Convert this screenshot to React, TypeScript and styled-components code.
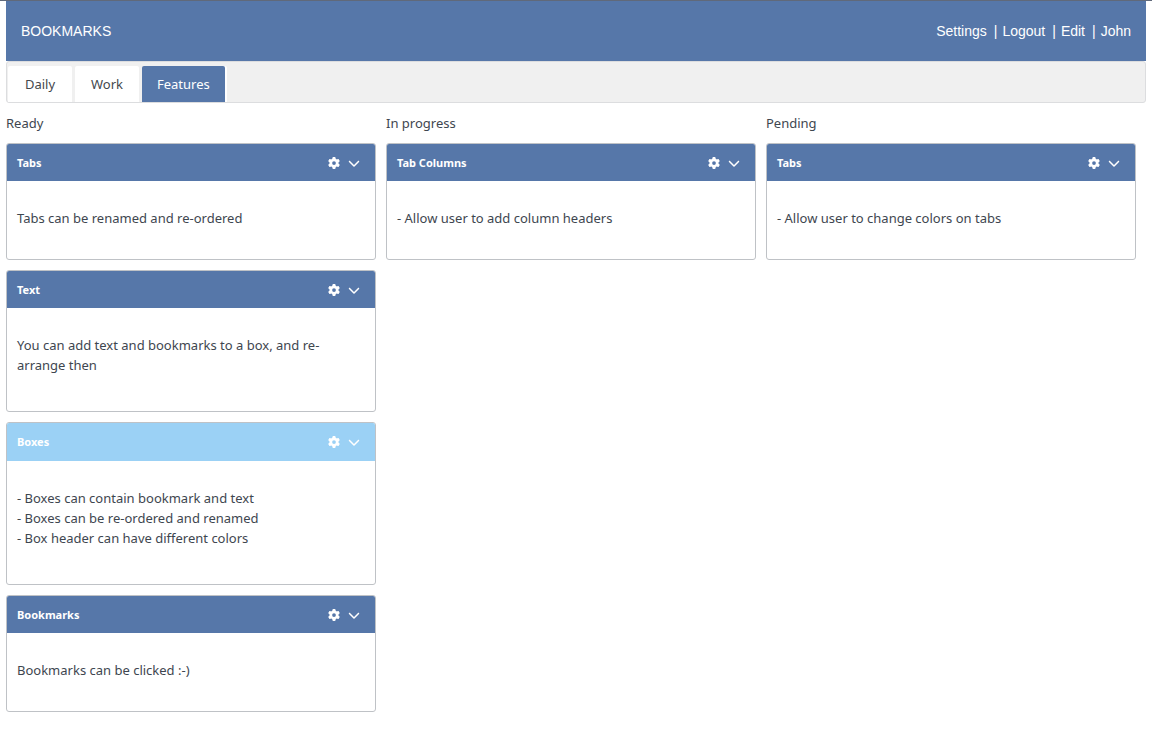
import React from "react";
import styled, { createGlobalStyle } from "styled-components";
import { FaGear, FaChevronDown } from "react-icons/fa6";

const blue = "#5677a9";
const lightBlue = "#9bd1f5";

const GlobalStyle = createGlobalStyle`
  *, *::before, *::after { box-sizing: border-box; }
  body {
    margin: 0;
    background: #fff;
    color: #3e464f;
    font: 13px/20px "Noto Sans", "Open Sans", sans-serif;
  }
  button { font: inherit; border: 0; padding: 0; cursor: pointer; }
`;

const Page = styled.div`
  border-top: 1px solid #60697a;
  padding: 0 6px 24px;
`;

const Header = styled.header`
  display: flex;
  align-items: center;
  justify-content: space-between;
  height: 60px;
  padding: 0 15px;
  background: ${blue};
  color: #fff;
  font: 14px/20px "Liberation Sans", Arial, sans-serif;
`;

const Brand = styled.h1`
  margin: 0;
  font: inherit;
`;

const UserNav = styled.nav`
  display: flex;
`;

const NavLink = styled.a`
  color: inherit;
  text-decoration: none;

  & + &::before {
    content: "|";
    margin: 0 5px 0 7px;
  }
`;

const TabBar = styled.div`
  display: flex;
  gap: 3px;
  height: 42px;
  padding: 4px 1px 0;
  background: #f0f0f0;
  border: 1px solid #dcdddf;
  border-radius: 3px;
`;

const Tab = styled.button<{ $active?: boolean }>`
  height: 36px;
  min-width: 64px;
  padding: 0 15px;
  border-radius: 2px 2px 0 0;
  background: ${(p) => (p.$active ? blue : "#fff")};
  color: ${(p) => (p.$active ? "#fff" : "#44484d")};
  box-shadow: ${(p) => (p.$active ? "2px 0 0 #fff" : "none")};
`;

const Board = styled.main`
  display: grid;
  grid-template-columns: repeat(3, 1fr);
  align-items: start;
  gap: 10px;
  padding: 10px 10px 0 0;
`;

const Column = styled.section`
  display: flex;
  flex-direction: column;
  gap: 10px;
`;

const ColumnTitle = styled.h2`
  margin: 0;
  font: inherit;
`;

const Card = styled.article`
  overflow: hidden;
  border: 1px solid #bfc2c6;
  border-radius: 3px;
`;

const CardHeader = styled.header<{ $light?: boolean }>`
  display: flex;
  align-items: center;
  justify-content: space-between;
  height: ${(p) => (p.$light ? 38 : 37)}px;
  padding: 0 15px 0 10px;
  background: ${(p) => (p.$light ? lightBlue : blue)};
  color: #fff;
`;

const CardTitle = styled.h3`
  margin: 0;
  font-size: 11px;
  line-height: 20px;
  font-weight: 700;
`;

const Actions = styled.div`
  display: flex;
  gap: 8px;
`;

const IconButton = styled.button`
  display: flex;
  background: none;
  color: inherit;
`;

const CardBody = styled.div<{ $roomy?: boolean }>`
  padding: 27px 10px ${(p) => (p.$roomy ? 36 : 31)}px;
`;

const Line = styled.p`
  margin: 0;
`;

type Box = { title: string; lines: string[]; light?: boolean; roomy?: boolean };

const columns: { title: string; boxes: Box[] }[] = [
  {
    title: "Ready",
    boxes: [
      { title: "Tabs", lines: ["Tabs can be renamed and re-ordered"] },
      {
        title: "Text",
        lines: ["You can add text and bookmarks to a box, and re-arrange then"],
        roomy: true,
      },
      {
        title: "Boxes",
        lines: [
          "- Boxes can contain bookmark and text",
          "- Boxes can be re-ordered and renamed",
          "- Box header can have different colors",
        ],
        light: true,
        roomy: true,
      },
      { title: "Bookmarks", lines: ["Bookmarks can be clicked :-)"] },
    ],
  },
  {
    title: "In progress",
    boxes: [{ title: "Tab Columns", lines: ["- Allow user to add column headers"] }],
  },
  {
    title: "Pending",
    boxes: [{ title: "Tabs", lines: ["- Allow user to change colors on tabs"] }],
  },
];

const tabs = ["Daily", "Work", "Features"];
const links = ["Settings", "Logout", "Edit", "John"];

export default function App() {
  const [active, setActive] = React.useState("Features");

  return (
    <Page>
      <GlobalStyle />
      <Header>
        <Brand>BOOKMARKS</Brand>
        <UserNav>
          {links.map((link) => (
            <NavLink key={link} href={`#${link.toLowerCase()}`}>
              {link}
            </NavLink>
          ))}
        </UserNav>
      </Header>
      <TabBar role="tablist">
        {tabs.map((tab) => (
          <Tab
            key={tab}
            role="tab"
            aria-selected={tab === active}
            $active={tab === active}
            onClick={() => setActive(tab)}
          >
            {tab}
          </Tab>
        ))}
      </TabBar>
      <Board>
        {columns.map((column) => (
          <Column key={column.title}>
            <ColumnTitle>{column.title}</ColumnTitle>
            {column.boxes.map((box) => (
              <Card key={box.title}>
                <CardHeader $light={box.light}>
                  <CardTitle>{box.title}</CardTitle>
                  <Actions>
                    <IconButton aria-label={`${box.title} settings`}>
                      <FaGear size={12} />
                    </IconButton>
                    <IconButton aria-label={`Collapse ${box.title}`}>
                      <FaChevronDown size={12} />
                    </IconButton>
                  </Actions>
                </CardHeader>
                <CardBody $roomy={box.roomy}>
                  {box.lines.map((line) => (
                    <Line key={line}>{line}</Line>
                  ))}
                </CardBody>
              </Card>
            ))}
          </Column>
        ))}
      </Board>
    </Page>
  );
}
